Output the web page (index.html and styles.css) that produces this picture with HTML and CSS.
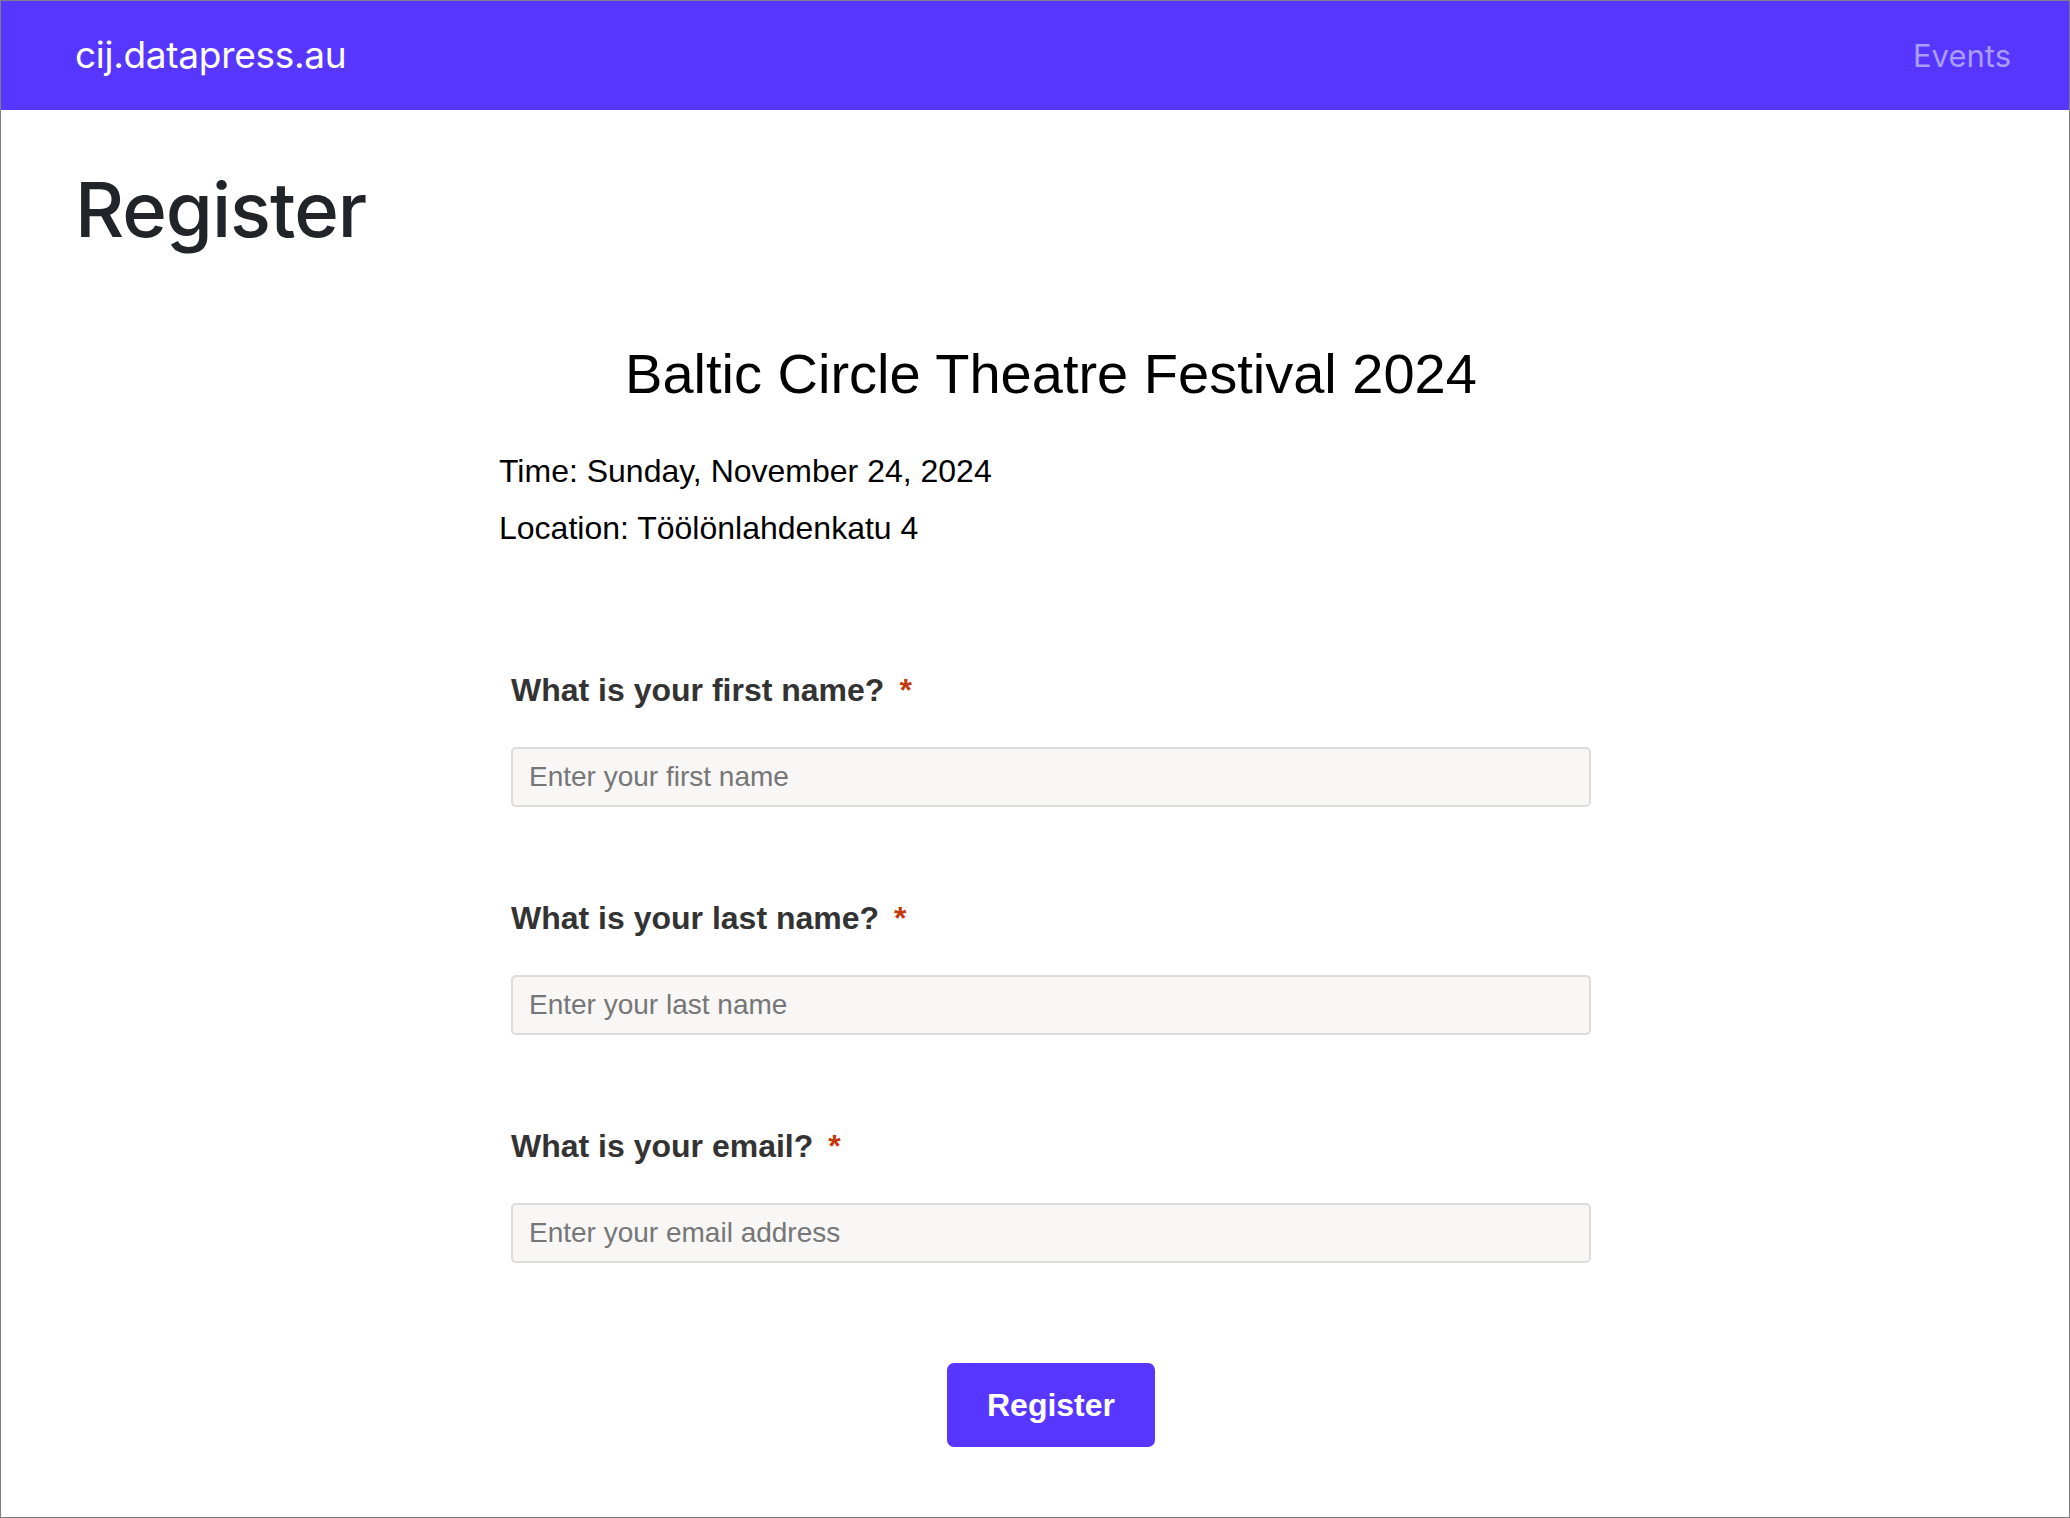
FILE: index.html
```html
<!DOCTYPE html>
<html lang="en">
<head>
<meta charset="utf-8">
<title>Register</title>
<link rel="stylesheet" href="styles.css">
</head>
<body>
<div class="frame">
  <header class="navbar">
    <a class="brand" href="#">cij.datapress.au</a>
    <a class="nav-link" href="#">Events</a>
  </header>
  <main class="main">
    <h1 class="page-title">Register</h1>
    <section class="event">
      <h2 class="event-title">Baltic Circle Theatre Festival 2024</h2>
      <div class="event-meta">
        <p class="meta-line">Time: Sunday, November 24, 2024</p>
        <p class="meta-line">Location: Töölönlahdenkatu 4</p>
      </div>
      <form class="reg-form">
        <div class="field">
          <label class="field-label" for="first">What is your first name?<span class="req">*</span></label>
          <input class="field-input" id="first" type="text" placeholder="Enter your first name">
        </div>
        <div class="field">
          <label class="field-label" for="last">What is your last name?<span class="req">*</span></label>
          <input class="field-input" id="last" type="text" placeholder="Enter your last name">
        </div>
        <div class="field">
          <label class="field-label" for="email">What is your email?<span class="req">*</span></label>
          <input class="field-input" id="email" type="email" placeholder="Enter your email address">
        </div>
        <div class="actions">
          <button class="btn-register" type="button">Register</button>
        </div>
      </form>
    </section>
  </main>
</div>
</body>
</html>
```

FILE: styles.css
```css
* { box-sizing: border-box; }
html, body { margin: 0; padding: 0; background: #ffffff; }
.frame {
  width: 2070px;
  height: 1518px;
  border: 1px solid #7e7c84;
  overflow: hidden;
  background: #ffffff;
}
.navbar {
  height: 109px;
  background: #5737ff;
  display: flex;
  align-items: center;
  justify-content: space-between;
  padding: 0 58px 0 74px;
  font-family: Inter, "Noto Sans", sans-serif;
}
.brand {
  color: #ffffff;
  text-decoration: none;
  font-size: 37px;
  letter-spacing: -0.3px;
  margin-top: -2px;
}
.nav-link {
  color: #a99dff;
  text-decoration: none;
  font-size: 31px;
}
.main {
  padding: 0 42px 0 74px;
}
.page-title {
  margin: 54px 0 0 0;
  font-family: Inter, "Noto Sans", sans-serif;
  font-weight: 500;
  font-size: 76px;
  line-height: 91px;
  letter-spacing: -1px;
  color: #212529;
}
.event {
  max-width: 1104px;
  margin: 85px auto 0 auto;
  font-family: "Liberation Sans", Arial, sans-serif;
}
.event-title {
  margin: 0;
  text-align: center;
  font-weight: 400;
  font-size: 56px;
  line-height: 67px;
  color: #000000;
}
.event-meta {
  margin-top: 41px;
  display: flex;
  flex-direction: column;
  gap: 11px;
}
.meta-line {
  margin: 0;
  font-size: 32px;
  line-height: 46px;
  color: #000000;
}
.reg-form {
  padding: 119px 12px 0 12px;
  display: flex;
  flex-direction: column;
  gap: 91px;
}
.field {
  display: flex;
  flex-direction: column;
  gap: 37px;
}
.field-label {
  font-weight: 700;
  font-size: 32px;
  line-height: 40px;
  color: #333333;
}
.req {
  color: #c43a10;
  margin-left: 15px;
}
.field-input {
  height: 60px;
  width: 100%;
  background: #f8f7f6;
  border: 2px solid #dddcdb;
  border-radius: 5px;
  padding: 0 16px;
  font-family: "Liberation Sans", Arial, sans-serif;
  font-size: 28px;
  color: #333333;
  outline: none;
}
.field-input::placeholder {
  color: #767676;
}
.actions {
  display: flex;
  justify-content: center;
  margin-top: 9px;
}
.btn-register {
  height: 84px;
  width: 208px;
  background: #5737ff;
  color: #ffffff;
  border: none;
  border-radius: 7px;
  font-family: "Liberation Sans", Arial, sans-serif;
  font-weight: 700;
  font-size: 32px;
  cursor: pointer;
}
```
